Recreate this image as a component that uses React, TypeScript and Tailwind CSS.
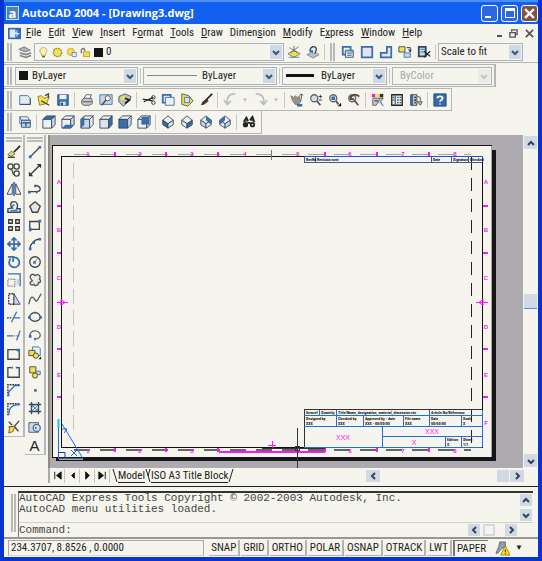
import React from "react";

const O = "#33465c";
const B = "#3a6ea8";
const Y = "#f4e04a";
const L = "#c9d8e8";

const cube = (top: string, left: string, right: string) => (
  <>
    <path d="M1 5 5 1H15L11 5Z" fill={top} stroke={O} />
    <path d="M1 5H11V15H1Z" fill={left} stroke={O} />
    <path d="M11 5 15 1V11L11 15Z" fill={right} stroke={O} />
  </>
);
const iso = (top: string, left: string, right: string) => (
  <>
    <path d="M8 1 14 6 8 10 2 6Z" fill={top} stroke={O} />
    <path d="M2 6 8 10V15L2 11Z" fill={left} stroke={O} />
    <path d="M14 6 8 10V15L14 11Z" fill={right} stroke={O} />
  </>
);
const W = "#eef1f3";

const art: Record<string, React.ReactNode> = {
  layers: (<><path d="M1 5 7 2 14 6 8 8Z" fill="#aab3ba" stroke="#777" /><path d="M2 9 9 11 15 9M2 12 9 14 15 12" fill="none" stroke="#888" strokeWidth="2" /></>),
  layerCurrent: (<><path d="M1 10 8 6 15 10 8 14Z" fill={Y} stroke="#777" /><path d="M8 1V8M3 3 12 9M13 2 4 9" stroke="#666" /><path d="M2 14H14" stroke={B} /></>),
  layerPrev: (<><path d="M1 11 8 7 15 11 8 15Z" fill="#b8c0c6" stroke="#888" /><path d="M5 8C3 1 12 0 12 5L10 10" fill="#dce6ee" stroke={O} strokeWidth="1.5" /><path d="M3 6H8V10Z" fill={B} /></>),
  viewports: (<><path d="M2 2H11V11H2Z" fill={W} stroke={B} strokeWidth="2" /><path d="M5 6H14V14H5Z" fill={W} stroke={O} /><path d="M6 8H14M7 10H13M7 12H12" stroke={B} /></>),
  viewport: (<path d="M2 2H14V14H2Z" fill="#dfe6ec" stroke={B} strokeWidth="2" />),
  polyport: (<path d="M9 2H14V14H2V9H9Z" fill="#dfe6ec" stroke={B} strokeWidth="2" />),
  objport: (<><path d="M1 2H8V8H1Z" fill={Y} stroke={O} /><path d="M10 3H14V8M12 5 14 8 15 5" fill="none" stroke="#222" /><path d="M7 9H14V14H7Z" fill={L} stroke={B} /></>),
  clipport: (<><path d="M2 2H10V13H2Z" fill={L} stroke={O} strokeWidth="2" /><path d="M4 5H9M4 8H9" stroke={B} /><path d="M8 7 15 13M15 7 8 14" stroke="#222" strokeWidth="1.5" /></>),
  new: (<><path d="M2 3H11L14 6V13H2Z" fill="#e4edf6" stroke={B} /><path d="M2 13H14V6" fill="none" stroke={O} /></>),
  open: (<><path d="M1 4 5 3 8 6 14 4 11 12 3 14Z" fill={Y} stroke="#8a7a20" /><path d="M9 3 13 1V5M5 9 14 14" fill="none" stroke="#444" strokeWidth="1.5" /></>),
  save: (<><path d="M2 2H14V14H2Z" fill="#3a75b8" stroke="#234e84" /><path d="M4 2H12V7H4Z" fill={W} /><path d="M5 10H11V14H5Z" fill="#d9e2ea" /><path d="M6 11H8V14H6Z" fill="#333" /></>),
  print: (<><path d="M4 7 7 2H13L11 7Z" fill="#fff" stroke="#555" /><path d="M2 8 5 6H13L14 9V12L11 14H4L2 12Z" fill="#c4cbd0" stroke="#555" /><path d="M3 10H13" stroke="#444" /></>),
  preview: (<><path d="M1 2H15V13H1Z" fill={L} stroke={B} /><path d="M8 8 3 14" stroke="#555" strokeWidth="2" /><circle cx="10" cy="6" r="3" fill="#eee" stroke="#555" /></>),
  publish: (<><path d="M1 4 8 1 15 4 13 9 6 15 1 10Z" fill="#b9c1c6" stroke="#555" /><path d="M4 4 8 3 7 8 3 8Z" fill={Y} /><path d="M8 6 13 8 8 12" fill="none" stroke="#222" strokeWidth="2" /></>),
  cut: (<><path d="M1 7 12 9M2 10 13 5" stroke="#222" strokeWidth="1.5" /><circle cx="13" cy="5" r="2" fill="none" stroke="#222" /><circle cx="13" cy="11" r="2" fill="none" stroke="#222" /></>),
  copy: (<><path d="M2 2H11V11H2Z" fill="#dceafa" stroke={B} strokeWidth="2" /><path d="M5 5H15V14H5Z" fill={W} stroke={B} /></>),
  paste: (<><path d="M2 1 10 3 15 9 9 15 2 13Z" fill={Y} stroke="#555" /><path d="M5 5H11V11H5Z" fill="#cfe2f8" stroke={B} /></>),
  match: (<><path d="M15 1 8 8" stroke="#222" strokeWidth="2" /><path d="M9 6 11 9 6 13 2 14 4 10Z" fill="#4a3428" /></>),
  undo: (<path d="M14 1C6 1 4 6 5 12M1 8 5 13 9 9" fill="none" stroke="#b9bcc0" strokeWidth="2" />),
  redo: (<path d="M2 1C10 1 12 6 11 12M15 8 11 13 7 9" fill="none" stroke="#b9bcc0" strokeWidth="2" />),
  pan: (<><path d="M1 3 4 5 6 3 8 5 11 4V7L13 8 10 13H6L3 9Z" fill="#9b9486" stroke="#777" /><path d="M13 1V7M11 3 13 1 15 3" fill="none" stroke={O} /><path d="M8 14H14" stroke={B} strokeWidth="3" /></>),
  zoomrt: (<><circle cx="6" cy="6" r="4" fill="#d5e2ec" stroke="#666" strokeWidth="1.5" /><path d="M9 9 13 14" stroke="#555" strokeWidth="2" /><path d="M11 4H15M13 2V6M11 8H15" stroke="#333" /></>),
  zoomwin: (<><circle cx="6" cy="6" r="4" fill="#d5e2ec" stroke="#666" strokeWidth="1.5" /><path d="M9 9 12 13" stroke="#555" strokeWidth="2" /><path d="M4 4H8V8H4Z" fill={B} /><path d="M15 11V15H11Z" fill="#111" /></>),
  zoomprev: (<><circle cx="6" cy="6" r="4" fill="#d5e2ec" stroke="#666" strokeWidth="1.5" /><path d="M8 8 13 14" stroke="#555" strokeWidth="2" /><path d="M4 6C6 1 10 1 14 4M4 3V7H8" fill="none" stroke="#654432" strokeWidth="2" /></>),
  props: (<><path d="M1 1H5V5H1Z" fill="#f020c8" /><path d="M5 1H10V5H5Z" fill={Y} /><path d="M10 1H14V5H10Z" fill="#333" /><path d="M2 6H14L11 10 14 15M10 7 6 14H2V7" fill="#c8cdd0" stroke="#555" /><path d="M4 9H8" stroke={B} strokeWidth="2" /></>),
  dc: (<><path d="M2 2H14V14H2Z" fill={W} stroke="#222" strokeWidth="1.5" /><path d="M6 2V14" stroke={B} strokeWidth="1.5" /><path d="M8 5H10M8 8H10M8 11H10M11 5H13M11 8H13M11 11H13M3 5H5M3 8H5" stroke="#555" strokeWidth="1.5" /></>),
  palette: (<><path d="M2 2H9V14H2Z" fill={W} stroke="#222" /><path d="M2 2H5V14H2Z" fill={B} /><path d="M6 5H8M6 8H8M6 11H8" stroke="#333" strokeWidth="2" /><path d="M10 4C14 4 13 7 13 9M10 10H15L13 14Z" fill={L} stroke="#444" /></>),
  help: (<><path d="M1 1H15V15H1Z" fill="#336ca8" stroke="#1f456f" /><path d="M5 6C5 3 11 3 11 6 11 8 8 8 8 10M8 12V13" fill="none" stroke="#fff" strokeWidth="2" /></>),
  named: (<><path d="M2 2H11L13 6H4Z" fill={W} stroke={B} /><path d="M2 2V10H4" fill="none" stroke={B} /><path d="M4 6H14V14H4Z" fill={L} stroke={O} /><path d="M5 9H14M9 9V13" stroke={B} strokeWidth="2" /></>),
  vtop: cube(B, W, L),
  vbottom: (<>{cube(W, W, L)}<path d="M1 15 5 11H15L11 15Z" fill={B} /></>),
  vleft: (<>{cube(W, L, W)}<path d="M1 5 5 1V11L1 15Z" fill={B} /></>),
  vright: cube(W, "#dce4ea", B),
  vfront: cube(W, B, L),
  vback: (<>{cube(W, W, L)}<path d="M5 2H14V11H5Z" fill={B} /></>),
  isosw: iso(W, B, "#dce4ea"),
  isose: iso(W, W, B),
  isone: (<>{iso(W, L, W)}<path d="M8 1 14 6V11L8 6Z" fill={B} /></>),
  isonw: (<>{iso(W, W, L)}<path d="M8 1 2 6V11L8 6Z" fill={B} /></>),
  camera: (<><path d="M2 8 5 3 7 7M9 6 12 2 14 8" fill="#555" stroke="#222" strokeWidth="2" /><circle cx="4" cy="11" r="3" fill="#222" /><circle cx="12" cy="11" r="3" fill="#222" /><circle cx="12" cy="11" r="1" fill="#ddd" /><path d="M6 9H10" stroke="#222" strokeWidth="2" /></>),
  erase: (<><path d="M15 1 8 8" stroke="#222" strokeWidth="2" /><path d="M5 7 9 10 5 13 1 11Z" fill={Y} stroke="#555" /><path d="M1 14H9" stroke="#333" strokeWidth="1.5" /></>),
  copyobj: (<g fill="none" stroke="#444" strokeWidth="1.5"><circle cx="4" cy="4" r="3" /><circle cx="11" cy="4" r="3" /><circle cx="11" cy="12" r="3" /><path d="M4 7C8 8 5 12 8 13" /><path d="M6 4H9" stroke={B} strokeWidth="2" /></g>),
  mirror: (<><path d="M6 2V14H0ZM10 2V14H16Z" fill="none" stroke="#333" /><path d="M8 0V16" stroke="#2d78d8" strokeWidth="2" /></>),
  offset: (<><path d="M1 14H15V10H11C14 5 10 1 7 2 3 3 4 7 6 9L1 10Z" fill="none" stroke={O} strokeWidth="1.5" /><path d="M4 12H12M7 10C5 7 7 5 9 6" fill="none" stroke="#2d78d8" strokeWidth="1.5" /></>),
  array: (<path d="M2 2H6V6H2ZM10 2H14V6H10ZM2 10H6V14H2ZM10 10H14V14H10Z" fill="none" stroke="#333" strokeWidth="1.5" />),
  move: (<path d="M8 1V15M1 8H15M5 4 8 1 11 4M5 12 8 15 11 12M4 5 1 8 4 11M12 5 15 8 12 11" fill="none" stroke={B} strokeWidth="2" />),
  rotate: (<path d="M4 4C-1 12 8 17 13 12 16 7 12 2 7 3M1 2H7V8" fill="none" stroke={B} strokeWidth="2" />),
  scale: (<><path d="M1 1H15V15" fill="none" stroke={B} strokeWidth="1.5" /><path d="M1 7H9V15H1Z" fill="none" stroke="#333" strokeDasharray="1 1" /><path d="M11 7H14V14H11Z" fill={L} /></>),
  stretch: (<><path d="M2 2H8V14H2Z" fill="none" stroke="#333" strokeWidth="1.5" strokeDasharray="2 1" /><path d="M8 2 15 14H8Z" fill={L} stroke={O} /></>),
  trim: (<><path d="M0 9H6" stroke="#333" strokeWidth="1.5" strokeDasharray="2 1" /><path d="M7 9H15M11 2 5 14" stroke={B} strokeWidth="1.5" /></>),
  extend: (<><path d="M0 9H7M12 9 14 9" stroke={B} strokeWidth="1.5" /><path d="M15 3 11 14" stroke={B} strokeWidth="1.5" /><path d="M8 9H11" stroke="#333" strokeDasharray="1 1" /></>),
  breakpt: (<><path d="M1 3H14V14H1Z" fill="none" stroke="#444" strokeWidth="1.5" /><path d="M11 2H15V5H11Z" fill={B} /></>),
  breaks: (<><path d="M5 3H1V14H14V3H11" fill="none" stroke="#444" strokeWidth="1.5" /><path d="M5 2H7V4H5ZM10 2H12V4H10Z" fill={B} /></>),
  chamfer: (<><path d="M1 15V2H15" fill="none" stroke="#333" strokeWidth="1.5" strokeDasharray="2 1" /><path d="M2 15V10L9 3H15" fill="none" stroke="#246cc4" strokeWidth="1.5" /></>),
  fillet: (<><path d="M1 15V2H15" fill="none" stroke="#333" strokeWidth="1.5" strokeDasharray="2 1" /><path d="M2 15C2 6 6 3 15 3" fill="none" stroke="#246cc4" strokeWidth="1.5" /></>),
  explode: (<><path d="M2 2 6 6M14 1 4 12M2 8H8M9 8 13 13M3 13 6 10" stroke="#444" strokeWidth="1.5" /><path d="M3 8 9 7 7 13 2 15Z" fill={Y} stroke="#8a5020" /></>),
  line: (<><path d="M2 14 14 2" stroke="#444" strokeWidth="1.5" /><path d="M1 12H4V15H1ZM12 1H15V4H12Z" fill={B} /></>),
  xline: (<><path d="M2 14 14 2" stroke="#333" strokeWidth="1.5" /><path d="M1 15V10L6 15ZM10 1H15V6Z" fill="#333" /><path d="M7 7H9V9H7Z" fill={B} /></>),
  pline: (<><path d="M1 11H10C16 11 15 4 8 4" fill="none" stroke="#444" strokeWidth="1.5" /><path d="M0 10H3V13H0ZM7 3H9V6H7ZM9 10H11V13H9Z" fill={B} /></>),
  polygon: (<path d="M8 2 14 7 11 14H5L2 7Z" fill="#e2e6e8" stroke="#444" strokeWidth="1.5" />),
  rect: (<><path d="M2 4H13V13H2Z" fill="none" stroke="#444" strokeWidth="1.5" /><path d="M12 2H15V5H12ZM1 11H4V15H1Z" fill={B} /></>),
  arc: (<><path d="M2 14C3 7 7 3 14 2" fill="none" stroke="#444" strokeWidth="1.5" /><path d="M1 12H4V15H1ZM5 5H8V8H5ZM12 1H15V4H12Z" fill={B} /></>),
  circle: (<><circle cx="8" cy="8" r="6" fill="none" stroke="#444" strokeWidth="1.5" /><path d="M7 9 11 4" stroke={B} /><path d="M6 7H9V10H6Z" fill={B} /></>),
  cloud: (<path d="M3 6C1 2 6 0 8 3 12 0 15 4 13 7 16 9 13 12 12 11 12 15 7 15 7 13 3 15 0 11 5 9Z" fill="#e9eded" stroke="#555" strokeWidth="1.5" />),
  spline: (<path d="M1 14C3 3 6 5 8 9S12 7 15 2" fill="none" stroke="#555" strokeWidth="1.5" />),
  ellipse: (<><ellipse cx="8" cy="8" rx="6" ry="5" fill="none" stroke="#444" strokeWidth="1.5" /><path d="M0 7H3V10H0ZM13 7H16V10H13ZM7 2H9V4H7Z" fill={B} /></>),
  earc: (<><path d="M2 9C3 1 14 2 14 9 13 12 10 13 8 12" fill="none" stroke="#666" strokeWidth="1.5" /><path d="M1 8H4V11H1ZM7 11H9V14H7Z" fill={B} /></>),
  insert: (<><path d="M5 1H12L14 3V11H5Z" fill="#e6eef6" stroke={B} /><path d="M1 5H8V11H1Z" fill={Y} stroke="#444" /><circle cx="9" cy="11" r="3" fill={Y} stroke="#444" /><path d="M15 12V15H12Z" fill="#111" /></>),
  block: (<><path d="M2 2H9V9H2Z" fill={Y} stroke="#444" /><path d="M9 7H14V11H9Z" fill={L} stroke={B} /><circle cx="8" cy="12" r="3" fill={Y} stroke="#444" /></>),
  point: (<path d="M7 7H10V10H7Z" fill={B} />),
  hatch: (<><path d="M4 1V15M12 1V15M1 4H15M1 12H15" stroke={O} strokeWidth="1.5" /><path d="M4 8 8 4M4 12 12 4M8 12 12 8M4 4 12 12" stroke={B} /></>),
  region: (<><path d="M1 3H12V14H1Z" fill={L} stroke="#555" /><circle cx="10" cy="9" r="4" fill="#dce6ee" stroke={B} strokeWidth="1.5" /><circle cx="9" cy="9" r="1" fill="#444" /></>),
  bulb: (<><path d="M5 10C0 5 4 1 8 1S15 5 11 10V12H5Z" fill="#fff8a0" stroke="#888" /><path d="M6 14H10" stroke="#555" strokeWidth="2" /></>),
  sun: (<circle cx="8" cy="8" r="6" fill={Y} stroke="#9a9240" strokeWidth="2" strokeDasharray="3 1" />),
  sunvp: (<><circle cx="7" cy="7" r="5" fill={Y} stroke="#c9a92c" strokeDasharray="2 1" strokeWidth="2" /><path d="M9 8H15V14H9Z" fill="#eef" stroke={B} /></>),
  lock: (<><path d="M2 9V5C2 1 7 1 7 6" fill="none" stroke="#777" strokeWidth="2" /><path d="M5 7H14V14H5Z" fill={Y} stroke="#a08a20" /></>),
  app: (<><path d="M0 1H16V15H0Z" fill="#2f6cb4" /><path d="M2 3H9V13H2Z" fill="#dfe9f4" /><path d="M11 4V12M8 8H14M9 6 13 10" stroke="#fff" /></>),
  comm: (<><path d="M5 1H11V6L7 8 3 13H1L4 6Z" fill="#8ba0b0" stroke="#667" /><path d="M11 5 16 15H6Z" fill="#ffe21a" stroke="#a08800" /><path d="M11 9V12M11 13V14" stroke="#222" /></>),
};

function Icon({ name, className = "h-4 w-4" }: { name: string; className?: string }) {
  return <svg viewBox="0 0 16 16" className={`${className} shrink-0`} aria-hidden="true">{art[name]}</svg>;
}

function Tool({ name, label }: { name: string; label: string }) {
  return (
    <button type="button" aria-label={label} className="flex h-[18px] w-[19px] shrink-0 items-center justify-center">
      {name === "text" ? <span className="font-['Liberation_Sans'] text-[15px] leading-none">A</span> : <Icon name={name} className="h-[14px] w-[14px]" />}
    </button>
  );
}

const Sep = () => <span className="mx-[2px] h-4 w-px shrink-0 bg-[#c9c9c0]" />;
const Grip = () => <span className="mx-[3px] h-[18px] w-[5px] shrink-0 border-x-2 border-[#b9b9bb]" />;

function Chevron({ dir, className = "" }: { dir: "up" | "down" | "left" | "right"; className?: string }) {
  const d = { up: "M2 7 5 4 8 7", down: "M2 4 5 7 8 4", left: "M7 2 4 5 7 8", right: "M4 2 7 5 4 8" }[dir];
  return (
    <svg viewBox="0 0 10 10" className={`h-[10px] w-[10px] ${className}`} aria-hidden="true">
      <path d={d} fill="none" stroke="currentColor" strokeWidth="2" />
    </svg>
  );
}

function Combo({ label, value, width, children, pad, disabled }: { label: string; value: string; width: string; children?: React.ReactNode; pad: string; disabled?: boolean }) {
  return (
    <div className={`relative h-[18px] shrink-0 border border-[#a9b3bd] ${width} ${disabled ? "text-[#a8a8a4]" : "text-[#222]"}`}>
      <select aria-label={label} disabled={disabled} className={`h-full w-full appearance-none bg-transparent text-[11px] leading-4 ${pad}`}>
        <option>{value}</option>
      </select>
      {children && <span className="pointer-events-none absolute inset-y-0 left-[3px] flex items-center gap-[3px]">{children}</span>}
      <span className={`pointer-events-none absolute inset-y-px right-px flex w-3 items-center justify-center ${disabled ? "bg-[#ecece6] text-[#c3c3bd]" : "bg-[#cfd9e5] text-[#3c5878]"}`}>
        <Chevron dir="down" />
      </span>
    </div>
  );
}

function Bar({ items }: { items: string[] }) {
  return <>{items.map((n, i) => (n === "|" ? <Sep key={i} /> : <Tool key={i} name={n.split(":")[0]} label={n.split(":")[1]} />))}</>;
}

const menus = ["File", "Edit", "View", "Insert", "Format", "Tools", "Draw", "Dimension", "Modify", "Express", "Window", "Help"];
const keys = [0, 0, 0, 0, 1, 0, 0, 5, 0, 1, 0, 0];
const modes = ["SNAP", "GRID", "ORTHO", "POLAR", "OSNAP", "OTRACK", "LWT"];

const standard = ["new:New", "open:Open", "save:Save", "|", "print:Plot", "preview:Plot Preview", "publish:Publish", "|", "cut:Cut", "copy:Copy", "paste:Paste", "match:Match Properties", "|", "undo:Undo"];
const standard2 = ["|", "pan:Pan", "zoomrt:Zoom Realtime", "zoomwin:Zoom Window", "zoomprev:Zoom Previous", "|", "props:Properties", "dc:DesignCenter", "palette:Tool Palettes", "|", "help:Help"];
const views = ["named:Named Views", "|", "vtop:Top", "vbottom:Bottom", "vleft:Left", "vright:Right", "vfront:Front", "vback:Back", "|", "isosw:SW Isometric", "isose:SE Isometric", "isone:NE Isometric", "isonw:NW Isometric", "|", "camera:Camera"];
const modify = ["erase:Erase", "copyobj:Copy Object", "mirror:Mirror", "offset:Offset", "array:Array", "move:Move", "rotate:Rotate", "scale:Scale", "stretch:Stretch", "trim:Trim", "extend:Extend", "breakpt:Break at Point", "breaks:Break", "chamfer:Chamfer", "fillet:Fillet", "explode:Explode"];
const draw = ["line:Line", "xline:Construction Line", "pline:Polyline", "polygon:Polygon", "rect:Rectangle", "arc:Arc", "circle:Circle", "cloud:Revision Cloud", "spline:Spline", "ellipse:Ellipse", "earc:Ellipse Arc", "insert:Insert Block", "block:Make Block", "point:Point", "hatch:Hatch", "region:Region", "text:Multiline Text"];

const M = "#f818f8";
const zoneTicks = [115, 166, 218, 325, 377, 429];
const zoneNumbers = [88, 140, 192, 245, 298, 350, 403, 455];
const zoneLetters: [string, number][] = [["A", 184], ["B", 232], ["C", 280], ["D", 329], ["E", 377], ["F", 425]];

function Sheet() {
  return (
    <svg viewBox="50 135 473 333" preserveAspectRatio="xMinYMin slice" className="h-full w-full" role="img" aria-label="ISO A3 drawing sheet" shapeRendering="crispEdges">
      <path d="M56 150H496V461H56Z" fill="#15151a" />
      <path d="M52.5 145.5H491.5V457.5H52.5Z" fill="#f5f5ee" stroke="#15151a" />
      <path d="M491.5 146V457" stroke="#a8a49a" />
      <path d="M61.5 156.5H482.5V447.5H61.5Z" fill="none" stroke="#111" />
      <path d="M304 156.5H482.5V162" fill="none" stroke="#1c50d8" />
      <path d="M73.5 163V430" stroke="#c3c3c3" strokeDasharray="15 6" />
      <path d="M74 154.5H471" stroke="#a3a3a3" strokeDasharray="16 10" />
      <path d="M471.5 157V447" stroke="#222" strokeDasharray="13 8" />
      <path d="M74 449.5H471" stroke="#666" strokeWidth="2" strokeDasharray="16 10" />
      <path d="M219 452H325" stroke={M} strokeWidth="2" />
      <g stroke={M} strokeWidth="2" shapeRendering="auto">
        {zoneTicks.map((x) => <path key={x} d={`M${x} 152V156M${x} 448V452`} />)}
        {[206, 253, 349, 397].map((y) => <path key={y} d={`M57 ${y}H61M483 ${y}H488`} />)}
      </g>
      <g stroke={M} fill="none" shapeRendering="auto">
        <path d="M57 302.5H68M476 302.5H488M272.5 441V449M268 445.5H276" />
        <path d="M61 299.5 65 302.5 61 305.5ZM483 299.5 479 302.5 483 305.5Z" />
      </g>
      <g fill={M} fontFamily="Liberation Sans, sans-serif" fontSize="6" fontWeight="bold" textAnchor="middle">
        {zoneLetters.map(([t, y]) => (
          <React.Fragment key={t}>
            {t !== "F" && <text x="59" y={y}>{t}</text>}
            <text x="486" y={y}>{t}</text>
          </React.Fragment>
        ))}
        {zoneNumbers.map((x, i) => (
          <React.Fragment key={x}>
            <text x={x} y="156">{i + 1}</text>
            {x !== 298 && <text x={x} y="453">{i + 1}</text>}
          </React.Fragment>
        ))}
      </g>
      <path d="M304.5 157V162.5H482M315.5 157V162M431.5 157V162M451.5 157V162M468.5 157V162" fill="none" stroke="#3c5c98" />
      <g fill="none">
        <path d="M304.5 447V409.5H482" stroke="#333" />
        <path d="M304 415.5H482M304 426.5H482M383 436.5H482M304 447.5H482M482.5 410V447M382.5 426V447M445.5 437V447M461.5 437V447M336.5 410V426M429.5 410V426M363.5 416V426M403.5 416V426M461.5 416V426M319.5 410V415" stroke="#246cdc" />
      </g>
      <g fontFamily="Liberation Sans Narrow, Roboto Condensed, sans-serif" fontSize="4" fontWeight="bold" fill="#111">
        <text x="306" y="161">RevNo</text><text x="317" y="161">Revision note</text><text x="433" y="161">Date</text><text x="453" y="161">Signature</text><text x="470" y="161">Checked</text>
        <text x="306" y="414">Itemref</text><text x="321" y="414">Quantity</text><text x="338" y="414">Title/Name, designation, material, dimension etc</text><text x="431" y="414">Article No/Reference</text>
        <text x="306" y="420">Designed by</text><text x="338" y="420">Checked by</text><text x="365" y="420">Approved by - date</text><text x="405" y="420">File name</text><text x="431" y="420">Date</text><text x="463" y="420">Scale</text>
        <text x="306" y="425">XXX</text><text x="338" y="425">XXX</text><text x="365" y="425">XXX - 00/00/00</text><text x="405" y="425">XXX</text><text x="431" y="425">00/00/00</text><text x="463" y="425">X</text>
        <text x="447" y="441">Edition</text><text x="447" y="446">X</text><text x="463" y="441">Sheet</text><text x="463" y="446">1/1</text>
      </g>
      <g fill={M} fontFamily="Liberation Sans, sans-serif" fontSize="7" textAnchor="middle"><text x="343" y="440">XXX</text><text x="432" y="434">XXX</text><text x="414" y="445">X</text></g>
      <g fill="none" stroke="#246cdc" shapeRendering="auto">
        <path d="M58.5 419V458M58 458.5H83L62 424" />
        <path d="M59 452.5H65V458" stroke="#1838a0" /><path d="M71 450 77 456M77 450 71 456M62 429H67L64 433" />
        <path d="M58.5 419V428" stroke="#10c8e0" strokeWidth="2" /><path d="M59 459.5H83" stroke="#bba860" />
      </g>
      <path d="M297.5 428V468M262 448.5H325" stroke="#333" /><path d="M295.5 446.5H299.5V450.5H295.5Z" fill="none" stroke="#333" />
      <path d="M271.5 150V160" stroke="#777" />
    </svg>
  );
}

const scrollBtn = "flex shrink-0 items-center justify-center bg-[#d0d9e4] text-[#33435a]";

export default function App() {
  return (
    <div className="flex h-screen min-h-[540px] w-full flex-col overflow-hidden border-x-4 border-b-4 border-[#0833d0] bg-[#f5f5ee] font-['Liberation_Sans_Narrow','Roboto_Condensed','Liberation_Sans',sans-serif] text-[11px] text-[#222]">
      <header className="flex h-6 shrink-0 items-center gap-[3px] border-t-2 border-[#4b8ff0] bg-[#125ff0] pl-[2px] text-white">
        <span className="flex h-[14px] w-[13px] items-center justify-center border border-[#c8def4] bg-[#4c83b8] font-['Open_Sans'] text-[13px] leading-none font-bold">a</span>
        <h1 className="flex-1 font-['Open_Sans',sans-serif] text-[11px] leading-5 font-bold">AutoCAD 2004 - [Drawing3.dwg]</h1>
        <button aria-label="Minimize" className="flex h-[17px] w-[17px] items-end rounded-[3px] border border-white bg-[#2c68e0] p-[3px]"><span className="h-[2px] w-[6px] bg-white" /></button>
        <button aria-label="Restore" className="flex h-[17px] w-[17px] items-center justify-center rounded-[3px] border border-white bg-[#2c68e0]"><span className="h-[10px] w-[10px] border border-t-[3px] border-white" /></button>
        <button aria-label="Close" className="flex h-[17px] w-[17px] items-center justify-center rounded-[3px] border border-white bg-[#80543f]"><svg viewBox="0 0 10 10" className="h-[11px] w-[11px]"><path d="M1 1 9 9M9 1 1 9" stroke="white" strokeWidth="2" /></svg></button>
      </header>

      <nav className="flex h-[18px] shrink-0 items-center gap-[7px] pr-1 pl-1">
        <Icon name="app" className="-mr-[2px] h-[13px] w-[13px]" />
        {menus.map((m, i) => (
          <button key={m} type="button" className="leading-4">{m.slice(0, keys[i])}<u>{m[keys[i]]}</u>{m.slice(keys[i] + 1)}</button>
        ))}
        <div className="ml-auto flex items-center gap-[7px] text-[#555]">
          <button aria-label="Minimize drawing" className="h-[7px] w-[5px] border-b-2" />
          <button aria-label="Restore drawing"><svg viewBox="0 0 10 10" className="h-[9px] w-[9px]"><path d="M3 3V1H9V6H7M1 4H7V9H1Z" fill="none" stroke="currentColor" strokeWidth="1.5" /></svg></button>
          <button aria-label="Close drawing"><svg viewBox="0 0 10 10" className="h-[9px] w-[9px]"><path d="M1 1 9 9M9 1 1 9" stroke="currentColor" strokeWidth="2" /></svg></button>
        </div>
      </nav>

      <div className="flex h-[21px] shrink-0 items-center border-b border-[#b5b5b2]">
        <Grip /><Tool name="layers" label="Layer Properties" />
        <Combo label="Layer" value="0" width="w-[250px]" pad="pl-[71px]">
          <Icon name="bulb" className="h-[11px] w-[11px]" /><Icon name="sun" className="h-[11px] w-[11px]" /><Icon name="sunvp" className="h-[11px] w-[11px]" /><Icon name="lock" className="h-[11px] w-[11px]" /><span className="h-[9px] w-[9px] bg-[#151515]" />
        </Combo>
        <Tool name="layerCurrent" label="Make Layer Current" /><Tool name="layerPrev" label="Layer Previous" />
        <Sep /><Grip />
        <Bar items={["viewports:Viewports", "viewport:Single Viewport", "polyport:Polygonal Viewport", "objport:Object to Viewport", "clipport:Clip Viewport"]} />
        <Sep />
        <Combo label="Viewport scale" value="Scale to fit" width="w-[85px]" pad="pl-[2px]" />
      </div>

      <div className="mt-px flex h-[23px] w-fit shrink-0 items-center border-y border-r-2 border-[#b5b5b2] pr-[2px]">
        <Grip />
        <Combo label="Color" value="ByLayer" width="w-[123px]" pad="pl-4"><span className="h-[9px] w-[9px] bg-[#151515]" /></Combo>
        <Sep />
        <Combo label="Linetype" value="ByLayer" width="w-[134px]" pad="pl-[58px]"><span className="h-px w-[50px] bg-[#888]" /></Combo>
        <Sep />
        <Combo label="Lineweight" value="ByLayer" width="w-[105px]" pad="pl-[38px]"><span className="h-[3px] w-7 bg-[#151515]" /></Combo>
        <Sep />
        <Combo label="Plot style" value="ByColor" width="w-[100px]" pad="pl-[7px]" disabled />
      </div>

      <div className="mt-px flex h-[23px] w-fit shrink-0 items-center border-y border-r border-[#b5b5b2] pr-[2px]">
        <Grip /><Bar items={standard} />
        <span className="w-3 text-center text-[6px] text-[#bbb]">▼</span><Tool name="redo" label="Redo" /><span className="w-3 text-center text-[6px] text-[#bbb]">▼</span>
        <Bar items={standard2} />
      </div>

      <div className="mb-px flex h-[23px] w-fit shrink-0 items-center border-r border-b border-[#b5b5b2] pr-[3px]">
        <Grip /><Bar items={views} />
      </div>

      <main className="flex min-h-0 flex-1 border-b border-[#222]">
        <div className="flex w-[44px] shrink-0 items-start">
          {[modify, draw].map((set, i) => (
            <div key={i} className="flex w-[21px] flex-col items-center border-r-2 border-b border-[#b9b9bd] pt-[2px]">
              <span className="mb-px h-[5px] w-4 border-y-2 border-[#bcbcb8]" />
              <div className={`flex flex-col justify-between ${i ? "h-[311px]" : "h-[293px]"}`}><Bar items={set} /></div>
            </div>
          ))}
        </div>
        <div className="flex min-w-0 flex-1 flex-col">
          <div className="flex min-h-0 flex-1">
            <div className="min-w-0 flex-1 overflow-hidden border-l-2 border-[#8e8a7c] bg-[#aeabb0]"><Sheet /></div>
            <div className="flex w-[15px] shrink-0 flex-col items-center justify-between bg-[#f5f5ee] py-px">
              <button aria-label="Scroll up" className={`${scrollBtn} h-[13px] w-[13px]`}><Chevron dir="up" /></button>
              <span className="h-[15px] w-[13px] border-b border-[#4b8fe0] bg-[#d0d9e4]" />
              <button aria-label="Scroll down" className={`${scrollBtn} h-[13px] w-[13px]`}><Chevron dir="down" /></button>
            </div>
          </div>
          <div className="flex h-[15px] shrink-0 items-center border-l-2 border-[#aaa]">
            {["M3 2V10M10 2 5 6 10 10Z", "M8 3 5 6 8 9Z", "M4 2 8 6 4 10Z", "M9 2V10M2 2 7 6 2 10Z"].map((d, i) => (
              <button key={d} aria-label={["First layout", "Previous layout", "Next layout", "Last layout"][i]} className="flex h-[14px] w-[15px] items-center justify-center border-r border-[#c4c4bc]">
                <svg viewBox="0 0 12 12" className="h-[11px] w-[11px]"><path d={d} fill="#111" stroke="#111" /></svg>
              </button>
            ))}
            <svg viewBox="0 0 6 14" className="ml-[2px] h-[14px] w-[6px]"><path d="M1 0 5 13" stroke="#222" /></svg>
            <button className="h-[14px] border-b border-[#222] leading-[13px]">Model</button>
            <svg viewBox="0 0 6 14" className="h-[14px] w-[6px]"><path d="M1 0 5 13M5 0 3 7" stroke="#222" /></svg>
            <button className="h-[14px] border-b border-[#222] leading-[13px]">ISO A3 Title Block</button>
            <svg viewBox="0 0 6 14" className="h-[14px] w-[6px]"><path d="M5 0 1 13" stroke="#222" /></svg>
            <div className="mr-[14px] ml-auto flex w-[158px] items-center justify-between">
              <button aria-label="Scroll left" className={`${scrollBtn} h-3 w-[14px]`}><Chevron dir="left" /></button>
              <span className="flex gap-px"><span className="h-3 w-3 bg-[#d0d9e4]" /><button aria-label="Scroll right" className={`${scrollBtn} h-3 w-[14px]`}><Chevron dir="right" /></button></span>
            </div>
          </div>
          <div className="h-[3px] shrink-0" />
        </div>
      </main>

      <section className="mt-[4px] flex h-[46px] shrink-0 pr-[5px] pl-[7px]">
        <span className="mt-[3px] mr-[2px] h-[38px] w-[5px] shrink-0 border-x-2 border-[#b9b9bb]" />
        <div className="flex min-w-0 flex-1 flex-col font-['Liberation_Mono',monospace] text-[11px] leading-[11px] text-[#444]">
          <div className="flex h-[32px] border-t-2 border-b border-l border-t-[#333] border-b-[#d0d0c4] border-l-[#777]">
            <div className="min-w-0 flex-1 overflow-hidden whitespace-pre"><p>AutoCAD Express Tools Copyright © 2002-2003 Autodesk, Inc.</p><p>AutoCAD menu utilities loaded.</p></div>
            <div className="mr-px flex w-3 flex-col justify-between py-px"><button aria-label="History up" className={`${scrollBtn} h-3`}><Chevron dir="up" /></button><button aria-label="History down" className={`${scrollBtn} h-3`}><Chevron dir="down" /></button></div>
          </div>
          <div className="flex h-[14px] items-center border-l border-[#777]">
            <label htmlFor="cmd">Command:</label>
            <input id="cmd" className="min-w-0 flex-1 bg-transparent outline-none" />
            <div className="mr-4 flex gap-[3px]"><button aria-label="Command left" className={`${scrollBtn} h-3 w-3`}><Chevron dir="left" /></button><span className="h-3 w-3 border-2 border-[#d0d9e4]" /><span className="w-1" /><button aria-label="Command right" className={`${scrollBtn} h-3 w-3`}><Chevron dir="right" /></button></div>
          </div>
        </div>
      </section>

      <footer className="flex h-[20px] shrink-0 items-center gap-px border-t-2 border-[#9a988e] pr-[3px] pl-1">
        <output className="mr-1 h-[16px] flex-1 border border-[#aaa] border-b-[#cfd6e0] pl-[2px] leading-[14px]">234.3707, 8.8526 , 0.0000</output>
        {modes.map((m) => <button key={m} type="button" className="h-4 border-r-2 border-b border-[#b5b5b0] px-[2px] leading-[14px]">{m}</button>)}
        <button type="button" className="h-4 border-t border-l-2 border-[#777] px-[2px] leading-[14px]">PAPER</button>
        <button aria-label="Communication Center" className="ml-[6px]"><Icon name="comm" className="h-[15px] w-[15px]" /></button>
        <button aria-label="Status bar menu" className="mr-3 ml-1 text-[8px]">▼</button>
      </footer>
    </div>
  );
}
